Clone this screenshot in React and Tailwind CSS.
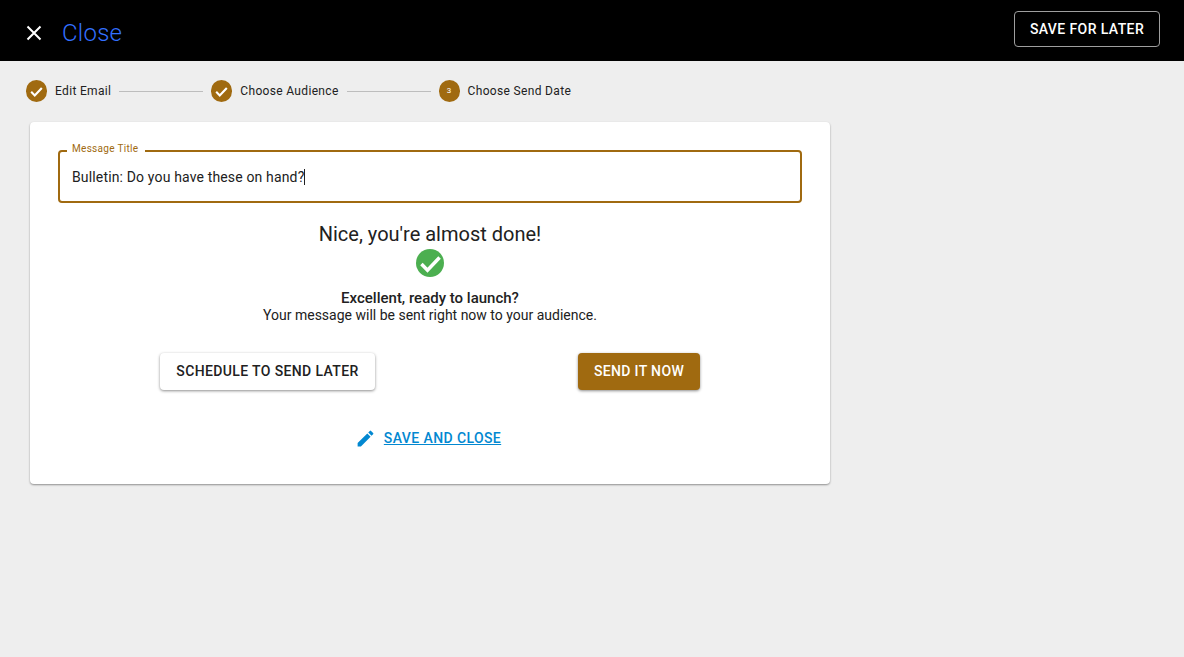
import React from "react";

const Check = ({ size = 17, color = "#fff", sw = 3 }) => (
  <svg className="shrink-0" width={size} height={size} viewBox="0 0 24 24" fill="none" stroke={color} strokeWidth={sw}>
    <path d="M4.5 12.5l5 5 10-10.5" />
  </svg>
);

const Step = ({ done, n, label }) => (
  <div className="flex items-center gap-2">
    <div className="flex h-[22px] w-[21px] items-center justify-center rounded-full bg-[#a06a10] text-[8px] text-white">
      {done ? <Check /> : n}
    </div>
    <span className="text-[12px] font-normal leading-none tracking-[0.33px] text-[#212121]">{label}</span>
  </div>
);

const Line = ({ w }) => <div className={`mx-2 h-px bg-[#bdbdbd] ${w}`} />;

export default function App() {
  return (
    <div className="flex min-h-[657px] flex-col bg-[#eeeeee] font-['Roboto',sans-serif]">
      <header className="flex h-[61px] items-center justify-between bg-black pl-[24px] pr-[24px]">
        <div className="flex items-center gap-[18px] pt-[4px]">
          <svg width="20" height="20" viewBox="0 0 20 20" stroke="#fff" strokeWidth="2" fill="none">
            <path d="M3.5 3.5l13 13M16.5 3.5l-13 13" />
          </svg>
          <span className="text-[24px] font-light leading-none tracking-[0.25px] text-[#3370ff]">Close</span>
        </div>
        <button className="mb-[3px] flex h-[36px] w-[146px] items-center justify-center rounded border border-[#9e9e9e] text-[14px] font-medium tracking-[0.4px] text-white">
          SAVE FOR LATER
        </button>
      </header>

      <nav className="flex h-[61px] items-center pl-[26px] pb-[1px]">
        <Step done label="Edit Email" />
        <Line w="w-[84px]" />
        <Step done label="Choose Audience" />
        <Line w="w-[84px]" />
        <Step n="3" label="Choose Send Date" />
      </nav>

      <main className="ml-[30px] flex h-[362px] w-[800px] flex-col items-center rounded bg-white px-[28px] pt-[28px] shadow-[0_1px_2px_rgba(0,0,0,0.4)]">
        <div className="relative flex h-[53px] w-full items-center rounded border-2 border-[#a06a10] pl-[12px] pt-[1px]">
          <span className="absolute left-[7px] top-[-10px] bg-white pl-[5px] pr-[7px] text-[10px] leading-[14px] tracking-[0.3px] text-[#a06a10]">
            Message Title
          </span>
          <span className="text-[14px] tracking-[0.15px] text-[#212121]">Bulletin: Do you have these on hand?</span>
          <span className="h-[16px] w-px bg-[#212121]" />
        </div>

        <h1 className="mt-[19px] text-[20px] leading-[24px] text-[#212121]">Nice, you're almost done!</h1>
        <div className="mt-[3px] flex h-[28px] w-[28px] items-center justify-center overflow-hidden rounded-full bg-[#4caf50]">
          <Check size={29} sw={2.9} />
        </div>
        <p className="mt-[12px] text-[15px] font-medium leading-[18px] text-[#212121]">Excellent, ready to launch?</p>
        <p className="text-[14px] leading-[16px] text-[#212121]">Your message will be sent right now to your audience.</p>

        <div className="mt-[30px] flex w-full items-center justify-between pl-[102px] pr-[102px]">
          <button className="h-[37px] w-[215px] rounded bg-white text-[14px] font-medium tracking-[0.37px] text-[#212121] shadow-[0_1px_3px_rgba(0,0,0,0.45)]">
            SCHEDULE TO SEND LATER
          </button>
          <button className="h-[37px] w-[122px] rounded bg-[#a06a10] text-[14px] font-medium tracking-[0.35px] text-white shadow-[0_1px_3px_rgba(0,0,0,0.45)]">
            SEND IT NOW
          </button>
        </div>

        <div className="mt-[38px] mr-[4px] flex items-center gap-[8px]">
          <svg width="21" height="21" viewBox="0 0 24 24" fill="#0288d1">
            <path d="M3 17.25V21h3.75L17.81 9.94l-3.75-3.75L3 17.25zM20.71 7.04a1 1 0 0 0 0-1.41l-2.34-2.34a1 1 0 0 0-1.41 0l-1.83 1.83 3.75 3.75 1.83-1.83z" />
          </svg>
          <span className="text-[14px] font-medium tracking-[0.4px] text-[#0288d1] underline">SAVE AND CLOSE</span>
        </div>
      </main>
    </div>
  );
}
